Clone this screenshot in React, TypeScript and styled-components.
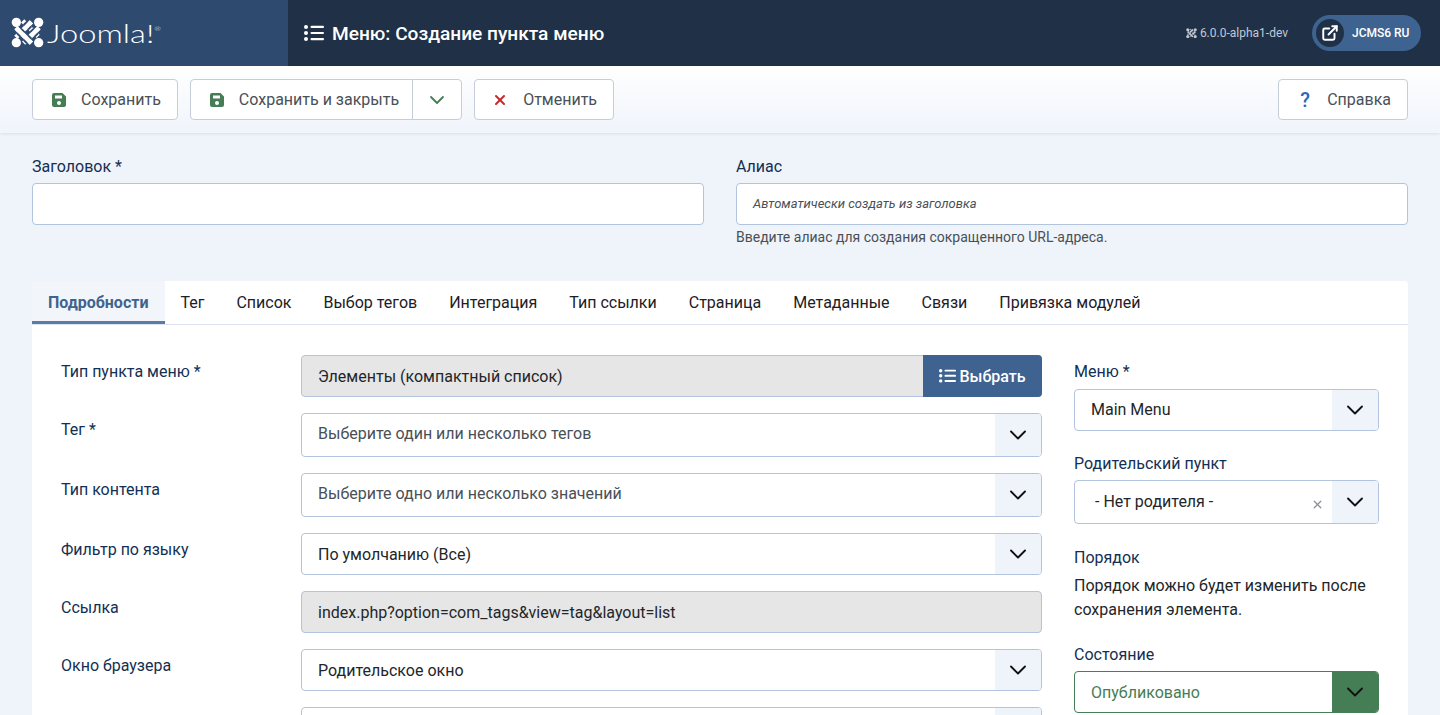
import React from "react";
import styled, { createGlobalStyle } from "styled-components";
import { ChevronDown, ExternalLink, X } from "lucide-react";

const GlobalStyle = createGlobalStyle`
  html, body {
    margin: 0;
    height: 715px;
    overflow: hidden;
    background: #eff4fb;
    font-family: Roboto, "Noto Sans", sans-serif;
  }
  * { box-sizing: border-box; }
`;

const Header = styled.header`
  display: flex;
  height: 66px;
  background: #1f3047;
  color: #fff;
`;

const Brand = styled.div`
  display: flex;
  align-items: center;
  gap: 3px;
  width: 288px;
  padding-left: 11px;
  background: #2e4a6f;
`;

const BrandText = styled.span`
  display: inline-block;
  font-family: Lato, sans-serif;
  font-weight: 300;
  font-size: 25px;
  transform: scaleX(1.31);
  transform-origin: left center;
`;

const BrandReg = styled.sup`
  font-size: 6px;
  vertical-align: 12px;
  line-height: 0;
`;

const PageTitle = styled.h1`
  display: flex;
  align-items: center;
  gap: 8px;
  margin: 0 0 0 16px;
  font-size: 19.1px;
  font-weight: 500;
  flex: 1;
`;

const Version = styled.div`
  display: flex;
  align-items: center;
  gap: 3px;
  font-size: 12px;
  color: #c3c9d2;
  margin-right: 24px;
`;

const SiteLink = styled.div`
  display: flex;
  align-items: center;
  align-self: center;
  width: 109px;
  height: 36px;
  margin-right: 19px;
  padding: 0 4px;
  border-radius: 18px;
  background: #3f6390;
  font-size: 12px;
  font-weight: 500;
  gap: 8px;
`;

const SiteIcon = styled.span`
  display: flex;
  align-items: center;
  justify-content: center;
  width: 28px;
  height: 28px;
  border-radius: 50%;
  background: #1f3047;
`;

const Toolbar = styled.div`
  display: flex;
  align-items: center;
  height: 67px;
  padding: 0 32px;
  gap: 12px;
  background: linear-gradient(#fff, #f0f4fb);
  box-shadow: 0 1px 3px rgba(60, 80, 120, 0.12);
`;

const ToolButton = styled.button<{ $left?: number; $right?: number }>`
  display: flex;
  align-items: center;
  height: 41px;
  padding: 0 ${(p) => p.$right ?? 16}px 0 ${(p) => p.$left ?? 19}px;
  gap: 15px;
  background: #fff;
  border: 1px solid #c5cdd9;
  border-radius: 4px;
  font: 400 16px Roboto, sans-serif;
  color: #495057;
`;

const ButtonGroup = styled.div`
  display: flex;
  ${ToolButton}:first-child {
    border-radius: 4px 0 0 4px;
  }
`;

const CaretButton = styled(ToolButton)`
  width: 50px;
  padding: 0;
  justify-content: center;
  margin-left: -1px;
  border-radius: 0 4px 4px 0;
`;

const Spacer = styled.div`
  flex: 1;
`;

const HelpMark = styled.span`
  width: 14px;
  text-align: center;
  font-size: 20px;
  font-weight: 500;
  color: #2a69b8;
`;

const TopFields = styled.div`
  display: grid;
  grid-template-columns: 672px 672px;
  column-gap: 32px;
  padding: 24px 32px 0;
  height: 148px;
`;

const Field = styled.div`
  display: flex;
  flex-direction: column;
`;

const TopLabel = styled.label`
  font-size: 16px;
  line-height: 19px;
  color: #132f53;
  margin-bottom: 7px;
`;

const TextBox = styled.div`
  display: flex;
  align-items: center;
  height: 42px;
  padding: 0 16px 2px;
  background: #fff;
  border: 1px solid #b2c4de;
  border-radius: 4px;
`;

const Placeholder = styled.span`
  font-size: 13px;
  font-style: italic;
  color: #495057;
`;

const Hint = styled.div`
  margin-top: 4px;
  font-size: 14px;
  color: #495057;
`;

const Card = styled.section`
  margin: 0 32px;
  background: #fff;
  border-radius: 4px 4px 0 0;
`;

const Tabs = styled.div`
  display: flex;
  height: 44px;
  border-bottom: 1px solid #dde4f0;
`;

const Tab = styled.div<{ $active?: boolean }>`
  display: flex;
  align-items: center;
  height: 43px;
  padding: 0 ${(p) => (p.$active ? 17 : 16)}px 0 16px;
  margin-right: ${(p) => (p.$active ? -1 : 0)}px;
  font-size: 16px;
  font-weight: ${(p) => (p.$active ? 700 : 400)};
  color: ${(p) => (p.$active ? "#3f6390" : "#1c2026")};
  background: ${(p) => (p.$active ? "#f2f6fa" : "transparent")};
  box-shadow: ${(p) => (p.$active ? "inset 0 -3px 0 #5b7ca6" : "none")};
`;

const Body = styled.div`
  display: grid;
  grid-template-columns: 981px 305px;
  column-gap: 32px;
  padding: 30px 0 0 29px;
`;

const MainColumn = styled.div`
  display: flex;
  flex-direction: column;
  gap: 16px;
`;

const Row = styled.div`
  display: grid;
  grid-template-columns: 240px 741px;
`;

const RowLabel = styled.label`
  padding-top: 7px;
  font-size: 16px;
  line-height: 19px;
  color: #132f53;
`;

const ReadOnly = styled.div`
  display: flex;
  align-items: stretch;
  height: 42px;
  background: #e6e6e6;
  border: 1px solid #b2c4de;
  border-radius: 4px;
  font-size: 16px;
  color: #22262a;
`;

const ReadOnlyText = styled.span`
  display: flex;
  align-items: center;
  flex: 1;
  padding-left: 16px;
`;

const PickButton = styled.div`
  display: flex;
  align-items: center;
  justify-content: center;
  gap: 3px;
  width: 119px;
  margin: -1px;
  border-radius: 0 4px 4px 0;
  background: #3f6390;
  color: #fff;
  font-weight: 500;
`;

const Select = styled.div<{ $h?: number; $state?: boolean }>`
  display: flex;
  align-items: center;
  height: ${(p) => p.$h ?? 42}px;
  background: #fff;
  border: 1px solid ${(p) => (p.$state ? "#457d54" : "#b2c4de")};
  border-radius: 4px;
  font-size: 16px;
  color: ${(p) => (p.$state ? "#457d54" : "#22262a")};
`;

const SelectValue = styled.span<{ $muted?: boolean; $inset?: number; $lift?: number }>`
  flex: 1;
  padding-left: ${(p) => p.$inset ?? 16}px;
  padding-bottom: ${(p) => p.$lift ?? 0}px;
  color: ${(p) => (p.$muted ? "#495057" : "inherit")};
`;

const Caret = styled.span<{ $state?: boolean }>`
  display: flex;
  align-items: center;
  justify-content: center;
  align-self: stretch;
  width: 46px;
  border-radius: 0 3px 3px 0;
  background: ${(p) => (p.$state ? "#457d54" : "#eff4fb")};
  color: #111;
`;

const ClearMark = styled.span`
  display: flex;
  margin: 5px 8px 0 0;
  color: #8a8f96;
`;

const SideColumn = styled.aside`
  display: flex;
  flex-direction: column;
`;

const SideLabel = styled.label<{ $top?: number; $bottom?: number }>`
  margin-top: ${(p) => p.$top ?? 0}px;
  margin-bottom: ${(p) => p.$bottom ?? 7}px;
  font-size: 16px;
  line-height: 19px;
  color: #132f53;
`;

const SideText = styled.p`
  margin: 0;
  font-size: 16px;
  line-height: 24px;
  color: #22262a;
`;

// interlaced bands: each crossing cuts the lower band, then redraws the upper one
const markCrossings = [
  { under: "M7 19 L13 13", over: "M6 12 L14 20" },
  { under: "M21 13 L27 19", over: "M28 12 L20 20" },
  { under: "M14 6 L20 12", over: "M21 5 L13 13" },
  { under: "M20 20 L14 26", over: "M13 19 L21 27" },
];

function JoomlaMark({ size = 33, color = "#fff", bg = "#2e4a6f" }: { size?: number; color?: string; bg?: string }) {
  return (
    <svg width={size} height={(size * 32) / 34} viewBox="0 0 34 32" fill="none">
      <g stroke={color} strokeWidth="4.6">
        <path d="M5 11 L21 27" />
        <path d="M12 4 L28 20" />
        <path d="M5 21 L21 5" />
        <path d="M13 27 L29 11" />
      </g>
      {markCrossings.map((c) => (
        <g key={c.over}>
          <path d={c.under} stroke={bg} strokeWidth="5" />
          <path d={c.over} stroke={color} strokeWidth="4.6" />
        </g>
      ))}
      <g fill={color}>
        <circle cx="5.5" cy="5.5" r="4.8" />
        <circle cx="28.5" cy="5.5" r="4.8" />
        <circle cx="5.5" cy="26.5" r="4.8" />
        <circle cx="28.5" cy="26.5" r="4.8" />
      </g>
    </svg>
  );
}

function ListIcon({ size = 20 }: { size?: number }) {
  return (
    <svg width={size} height={size * 0.8} viewBox="0 0 20 16" fill="currentColor">
      <circle cx="2" cy="2" r="2" />
      <circle cx="2" cy="8" r="2" />
      <circle cx="2" cy="14" r="2" />
      <rect x="6.5" y="0.8" width="13.5" height="2.2" rx="1" />
      <rect x="6.5" y="6.9" width="13.5" height="2.2" rx="1" />
      <rect x="6.5" y="13" width="13.5" height="2.2" rx="1" />
    </svg>
  );
}

function SaveIcon() {
  return (
    <svg width="14" height="16" viewBox="0 0 14 16">
      <path
        fill="#457d54"
        fillRule="evenodd"
        d="M2 1h8.5L14 4.5V13a2 2 0 0 1-2 2H2a2 2 0 0 1-2-2V3a2 2 0 0 1 2-2zM3 3.5v3h7v-3H3zM7 9a2 2 0 1 0 0 4 2 2 0 0 0 0-4z"
      />
    </svg>
  );
}

function Chevron() {
  return <ChevronDown size={28} strokeWidth={1.6} color="#111" />;
}

export default function App() {
  return (
    <>
      <GlobalStyle />
      <Header>
        <Brand>
          <JoomlaMark />
          <BrandText>
            Joomla!<BrandReg>®</BrandReg>
          </BrandText>
        </Brand>
        <PageTitle>
          <ListIcon />
          Меню: Создание пункта меню
        </PageTitle>
        <Version>
          <JoomlaMark size={11} color="#c3c9d2" bg="#1f3047" />
          6.0.0-alpha1-dev
        </Version>
        <SiteLink>
          <SiteIcon>
            <ExternalLink size={18} strokeWidth={2.6} />
          </SiteIcon>
          JCMS6 RU
        </SiteLink>
      </Header>

      <Toolbar>
        <ToolButton>
          <SaveIcon />
          Сохранить
        </ToolButton>
        <ButtonGroup>
          <ToolButton $right={13}>
            <SaveIcon />
            Сохранить и закрыть
          </ToolButton>
          <CaretButton>
            <ChevronDown size={24} strokeWidth={1.8} color="#457d54" />
          </CaretButton>
        </ButtonGroup>
        <ToolButton $left={17}>
          <X size={16} strokeWidth={3} color="#c5292e" />
          Отменить
        </ToolButton>
        <Spacer />
        <ToolButton>
          <HelpMark>?</HelpMark>
          Справка
        </ToolButton>
      </Toolbar>

      <TopFields>
        <Field>
          <TopLabel>Заголовок *</TopLabel>
          <TextBox />
        </Field>
        <Field>
          <TopLabel>Алиас</TopLabel>
          <TextBox>
            <Placeholder>Автоматически создать из заголовка</Placeholder>
          </TextBox>
          <Hint>Введите алиас для создания сокращенного URL-адреса.</Hint>
        </Field>
      </TopFields>

      <Card>
        <Tabs>
          <Tab $active>Подробности</Tab>
          <Tab>Тег</Tab>
          <Tab>Список</Tab>
          <Tab>Выбор тегов</Tab>
          <Tab>Интеграция</Tab>
          <Tab>Тип ссылки</Tab>
          <Tab>Страница</Tab>
          <Tab>Метаданные</Tab>
          <Tab>Связи</Tab>
          <Tab>Привязка модулей</Tab>
        </Tabs>
        <Body>
          <MainColumn>
            <Row>
              <RowLabel>Тип пункта меню *</RowLabel>
              <ReadOnly>
                <ReadOnlyText>Элементы (компактный список)</ReadOnlyText>
                <PickButton>
                  <ListIcon size={17} />
                  Выбрать
                </PickButton>
              </ReadOnly>
            </Row>
            <Row>
              <RowLabel>Тег *</RowLabel>
              <Select $h={44}>
                <SelectValue $muted $lift={4}>Выберите один или несколько тегов</SelectValue>
                <Caret><Chevron /></Caret>
              </Select>
            </Row>
            <Row>
              <RowLabel>Тип контента</RowLabel>
              <Select $h={44}>
                <SelectValue $muted $lift={4}>Выберите одно или несколько значений</SelectValue>
                <Caret><Chevron /></Caret>
              </Select>
            </Row>
            <Row>
              <RowLabel>Фильтр по языку</RowLabel>
              <Select>
                <SelectValue>По умолчанию (Все)</SelectValue>
                <Caret><Chevron /></Caret>
              </Select>
            </Row>
            <Row>
              <RowLabel>Ссылка</RowLabel>
              <ReadOnly>
                <ReadOnlyText>index.php?option=com_tags&amp;view=tag&amp;layout=list</ReadOnlyText>
              </ReadOnly>
            </Row>
            <Row>
              <RowLabel>Окно браузера</RowLabel>
              <Select>
                <SelectValue>Родительское окно</SelectValue>
                <Caret><Chevron /></Caret>
              </Select>
            </Row>
            <Row>
              <RowLabel />
              <Select>
                <SelectValue />
                <Caret><Chevron /></Caret>
              </Select>
            </Row>
          </MainColumn>
          <SideColumn>
            <SideLabel $top={7} $bottom={8}>Меню *</SideLabel>
            <Select>
              <SelectValue $lift={2}>Main Menu</SelectValue>
              <Caret><Chevron /></Caret>
            </Select>
            <SideLabel $top={23}>Родительский пункт</SideLabel>
            <Select $h={44}>
              <SelectValue $inset={20} $lift={2}>- Нет родителя -</SelectValue>
              <ClearMark><X size={13} strokeWidth={2.4} /></ClearMark>
              <Caret><Chevron /></Caret>
            </Select>
            <SideLabel $top={24}>Порядок</SideLabel>
            <SideText>Порядок можно будет изменить после сохранения элемента.</SideText>
            <SideLabel $top={23}>Состояние</SideLabel>
            <Select $state>
              <SelectValue>Опубликовано</SelectValue>
              <Caret $state><Chevron /></Caret>
            </Select>
          </SideColumn>
        </Body>
      </Card>
    </>
  );
}
